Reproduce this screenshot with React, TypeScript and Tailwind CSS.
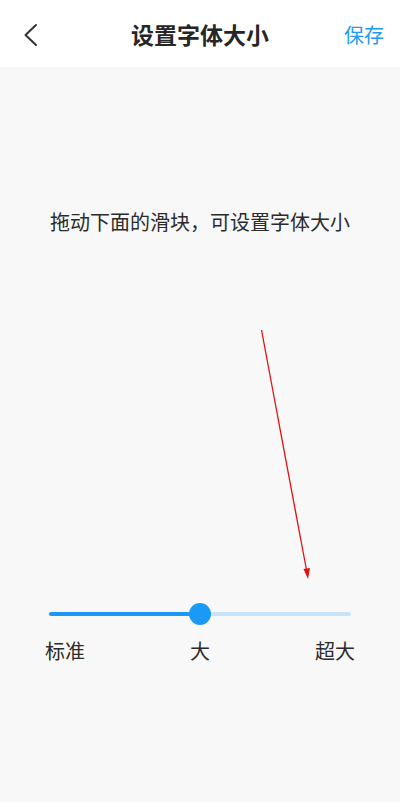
import React from "react";

export default function App() {
  const font = { fontFamily: '"Noto Sans CJK SC", "Noto Sans", sans-serif' };
  return (
    <div className="relative w-[400px] h-[802px] flex flex-col bg-[#f8f8f8] overflow-hidden" style={font}>
      <div className="h-[67px] bg-white grid grid-cols-[80px_1fr_80px] items-center px-[20px] shrink-0">
        <div className="h-[40px] flex items-center">
          <svg width="24" height="24" viewBox="0 0 24 24" className="mt-[3px]">
            <path d="M16 2 L5.5 12 L16 22" fill="none" stroke="#333" strokeWidth="2" strokeLinecap="round" strokeLinejoin="round" />
          </svg>
        </div>
        <div className="text-center text-[23px] font-bold text-[#262626] leading-[30px]">设置字体大小</div>
        <div className="text-[20px] text-[#1d9bf0] leading-[28px] text-right mr-[-4px] mt-[2px]">保存</div>
      </div>
      <div className="flex-1 flex flex-col">
        <div className="pt-[141px] text-center text-[20px] leading-[28px] text-[#2b2b2b]">
          拖动下面的滑块，可设置字体大小
        </div>
        <div className="mt-[366px] mx-[49px] h-[24px] relative flex items-center">
          <div className="flex-1 h-[4px] rounded-full bg-[#c6e3f9] flex">
            <div className="w-1/2 h-full rounded-full bg-[#1a9af5]" />
          </div>
          <div className="absolute left-1/2 top-[1px] -translate-x-1/2 w-[22px] h-[22px] rounded-full bg-[#1a9af5]" />
        </div>
        <div className="mt-[12px] px-[45px] flex justify-between text-[20px] leading-[26px] text-[#2b2b2b]">
          <span>标准</span>
          <span>大</span>
          <span>超大</span>
        </div>
      </div>
      <svg className="absolute left-0 top-0 pointer-events-none" width="400" height="802" viewBox="0 0 400 802">
        <line x1="261.5" y1="330" x2="306.5" y2="570" stroke="#e01010" strokeWidth="1.3" />
        <polygon points="308,579 303.5,569 310,568" fill="#e01010" />
      </svg>
    </div>
  );
}
